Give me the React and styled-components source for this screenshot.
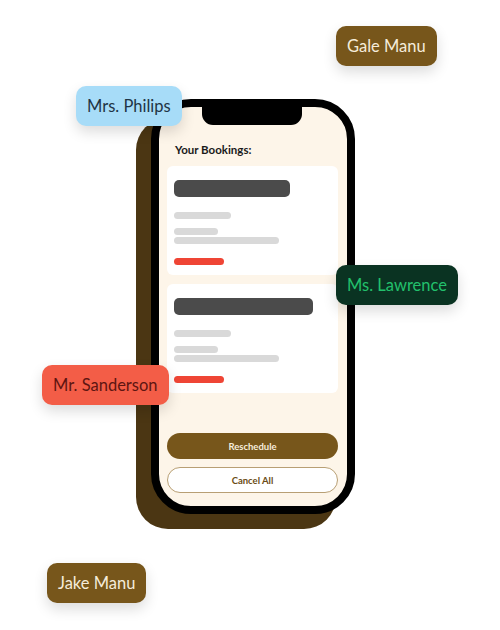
import React from 'react';
import styled, { createGlobalStyle } from 'styled-components';

const GlobalStyle = createGlobalStyle`
    html, body {
        margin: 0;
        padding: 0;
        background: #ffffff;
    }
    body {
        font-family: Lato, "Noto Sans", sans-serif;
    }
`;

const brown = '#77561b';
const cream = '#fdf5e9';

const tags = [
    { name: 'Gale Manu', x: 336, y: 26, bg: brown, fg: '#f5ecda' },
    { name: 'Mrs. Philips', x: 76, y: 86, bg: '#a7dcf8', fg: '#1f3445' },
    { name: 'Ms. Lawrence', x: 336, y: 265, bg: '#0a3322', fg: '#22c06c' },
    { name: 'Mr. Sanderson', x: 42, y: 365, bg: '#f35d47', fg: '#5e1511' },
    { name: 'Jake Manu', x: 47, y: 563, bg: brown, fg: '#f5ecda' },
];

const bookings = [
    { title: 116 },
    { title: 139 },
];

function BookingCard({ titleWidth }){
    return (
        <Card>
            <TitleBar w={titleWidth} />
            <Line w={57} />
            <LineGroup>
                <Line w={44} />
                <Line w={105} />
            </LineGroup>
            <Status />
        </Card>
    );
}

export default function App(){
    return (
        <Stage>
            <GlobalStyle />
            <PhoneWrap>
                <Phone>
                    <Notch />
                    <Screen>
                        <Heading>Your Bookings:</Heading>
                        <CardList>
                            {bookings.map((b, i) => (
                                <BookingCard key={i} titleWidth={b.title} />
                            ))}
                        </CardList>
                        <Actions>
                            <PrimaryButton>Reschedule</PrimaryButton>
                            <OutlineButton>Cancel All</OutlineButton>
                        </Actions>
                    </Screen>
                </Phone>
            </PhoneWrap>
            {tags.map(t => (
                <Tag key={t.name} x={t.x} y={t.y} bg={t.bg} fg={t.fg}>{t.name}</Tag>
            ))}
        </Stage>
    );
}

const Stage = styled.div`
    position: relative;
    width: 500px;
    height: 630px;
    overflow: hidden;
    padding: 99px 0 0 151px;
    box-sizing: border-box;
`;

// Phone
const PhoneWrap = styled.div`
    position: relative;
    width: 204px;
    height: 415px;

    &::before {
        content: '';
        position: absolute;
        left: -15px;
        top: 19px;
        width: 200px;
        height: 411px;
        border-radius: 32px;
        background: #4b3613;
    }
`;

const Phone = styled.div`
    position: relative;
    width: 100%;
    height: 100%;
    border: 8px solid #000;
    border-radius: 40px;
    background: ${cream};
    box-sizing: border-box;
    overflow: hidden;
`;

const Notch = styled.div`
    position: absolute;
    left: 43px;
    top: -1px;
    width: 100px;
    height: 19px;
    background: #000;
    border-radius: 0 0 11px 11px;
`;

const Screen = styled.div`
    display: flex;
    flex-direction: column;
    height: 100%;
    padding: 36px 9px 13px 8px;
    box-sizing: border-box;
`;

const Heading = styled.h1`
    margin: 0 0 9px 8px;
    font-size: 11.5px;
    line-height: 14px;
    font-weight: 700;
    color: #1a1a1a;
`;

const CardList = styled.div`
    display: flex;
    flex-direction: column;
    gap: 9px;
`;

const Card = styled.div`
    display: flex;
    flex-direction: column;
    align-items: flex-start;
    padding: 14px 7px 10px;
    background: #ffffff;
    border-radius: 6px;
`;

const TitleBar = styled.div`
    width: ${props => props.w}px;
    height: 17px;
    border-radius: 5px;
    background: #4b4b4b;
    margin-bottom: 15px;
`;

const Line = styled.div`
    width: ${props => props.w}px;
    height: 7px;
    border-radius: 4px;
    background: #d9d9d9;
`;

const LineGroup = styled.div`
    display: flex;
    flex-direction: column;
    gap: 2px;
    margin-top: 9px;
`;

const Status = styled.div`
    width: 50px;
    height: 7px;
    border-radius: 4px;
    background: #ef4535;
    margin-top: 14px;
`;

const Actions = styled.div`
    margin-top: auto;
    display: flex;
    flex-direction: column;
    gap: 8px;
`;

const buttonBase = `
    height: 26px;
    border-radius: 13px;
    font-family: Lato, "Noto Sans", sans-serif;
    font-size: 9.5px;
    font-weight: 700;
    box-sizing: border-box;
    cursor: pointer;
`;

const PrimaryButton = styled.button`
    ${buttonBase}
    border: 0;
    background: ${brown};
    color: #f6ecdc;
`;

const OutlineButton = styled.button`
    ${buttonBase}
    border: 1px solid #b89f74;
    background: #ffffff;
    color: #6a4c16;
`;

// Name tags
const Tag = styled.div`
    position: absolute;
    left: ${props => props.x}px;
    top: ${props => props.y}px;
    height: 40px;
    padding: 0 11px;
    display: flex;
    align-items: center;
    border-radius: 10px;
    background: ${props => props.bg};
    color: ${props => props.fg};
    font-size: 16.5px;
    box-shadow: 0 6px 14px rgba(0, 0, 0, 0.14);
    white-space: nowrap;
`;
